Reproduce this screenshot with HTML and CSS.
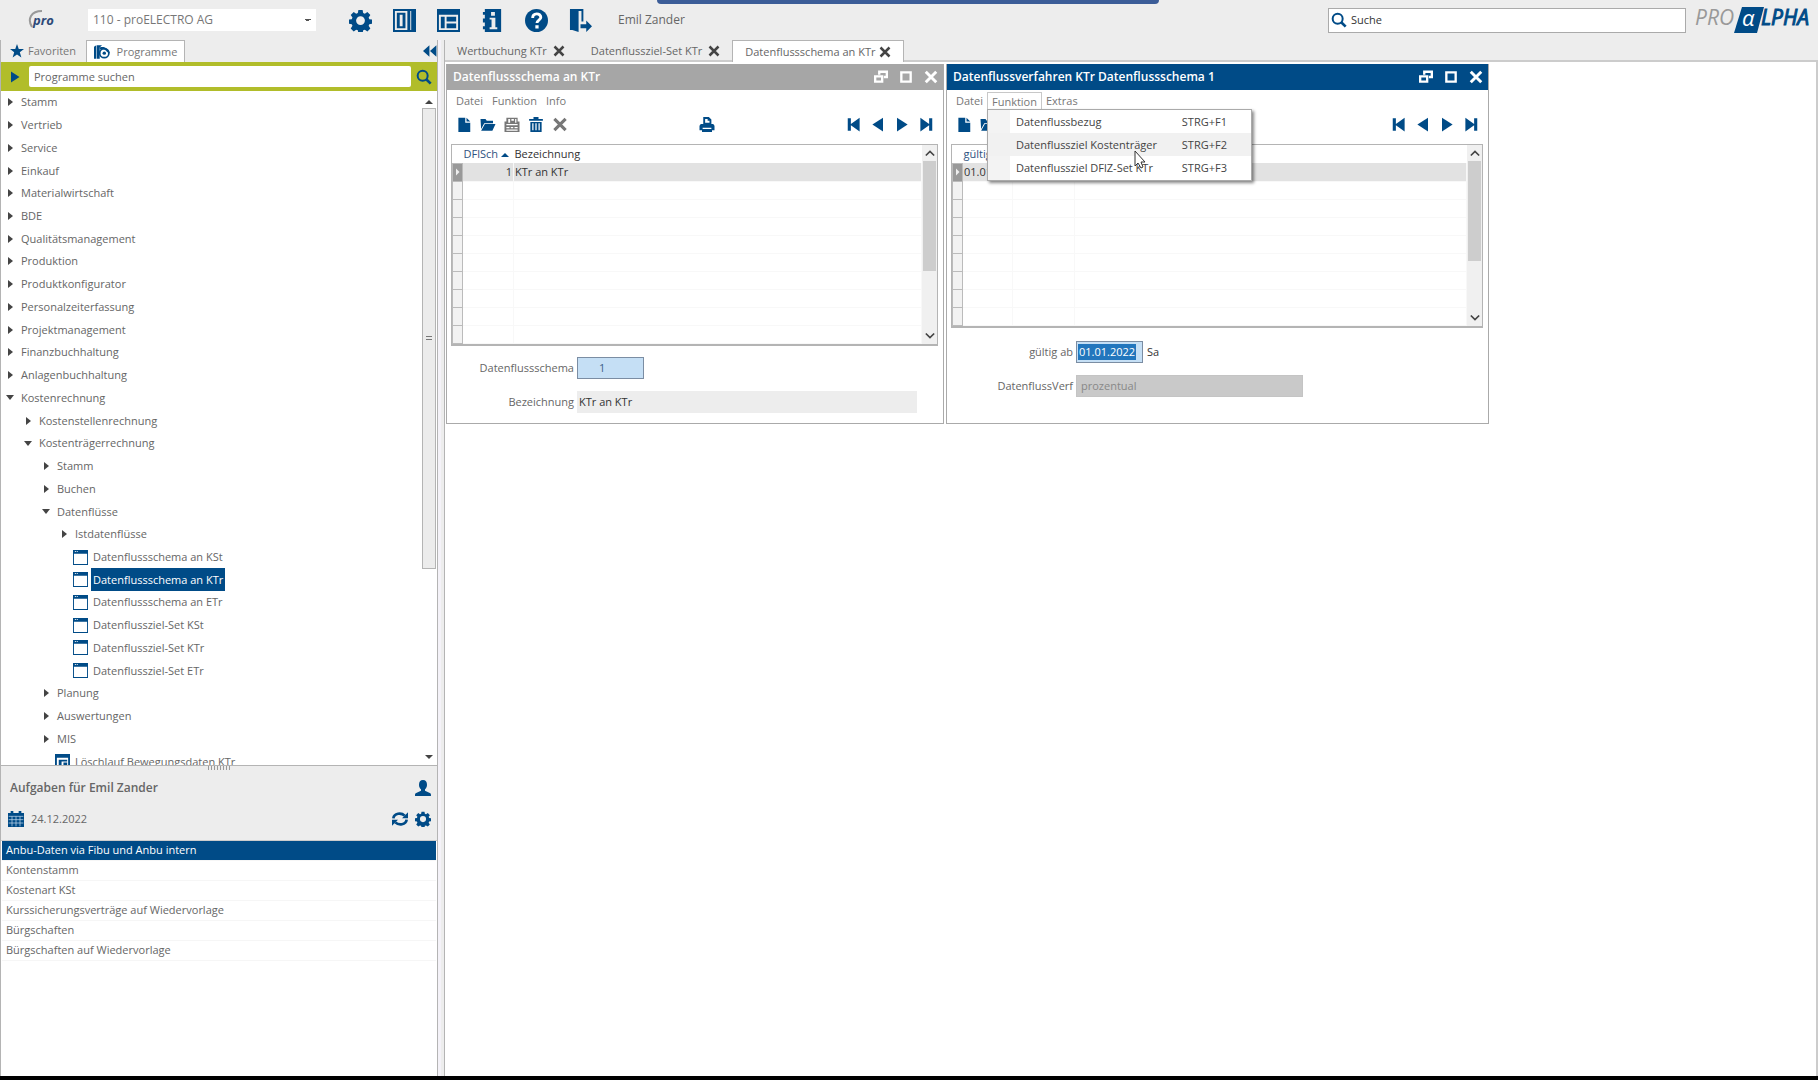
FILE: index.html
```html
<!DOCTYPE html>
<html lang="de">
<head>
<meta charset="utf-8">
<title>proALPHA</title>
<link rel="stylesheet" href="styles.css">
</head>
<body>
<svg class="defs" aria-hidden="true">
  <symbol id="gear" viewBox="0 0 24 24"><path fill-rule="evenodd" d="M9.800 1h4.400l.6 3.200 1.700.7 2.700-1.800 3.100 3.100-1.800 2.600.7 1.800 3.100.5v4.200l-3.100.6-.7 1.700 1.800 2.700-3.100 3.100-2.700-1.800-1.700.7-.6 3.200h-4.400l-.6-3.200-1.700-.7-2.600 1.800-3.100-3.100 1.800-2.700-.7-1.700-3.200-.6v-4.200l3.200-.5.7-1.800-1.800-2.600 3.100-3.100 2.600 1.800 1.700-.7zM12 7.500a4.600 4.600 0 1 0 0 9.200 4.600 4.600 0 0 0 0-9.200z"/></symbol>
  <symbol id="columns" viewBox="0 0 24 24"><path fill-rule="evenodd" d="M0 0h24v24H0zM2 2v20h13V2zM18 2v20h1V2zM4 4h9v16H4zM7 6v12h3V6z"/></symbol>
  <symbol id="panes" viewBox="0 0 24 24"><path fill-rule="evenodd" d="M0 0h24v24H0zM2 6v16h20V6zM4 8h4v12H4zM10 8h10v5H10zM10 15h10v5H10z"/></symbol>
  <symbol id="info" viewBox="0 0 24 24"><path fill-rule="evenodd" d="M4 0h17v24H4v-3H2v-3h2v-4H2v-4h2V6H2V3h2zM10.500 3v4h4V3zM9 9v2h2v8H9v2h8v-2h-2V9z"/></symbol>
  <symbol id="help" viewBox="0 0 24 24"><circle cx="12" cy="12" r="12"/><path d="M8 9.500c0-6 8.500-5.500 8.500-.8 0 3-4 3-4 6" fill="none" stroke="#fff" stroke-width="3"/><path d="M10.800 17h3.400v3.300h-3.400z" fill="#fff"/></symbol>
  <symbol id="exit" viewBox="0 0 24 24"><path d="M1 0h14v13h-2V2H9v20H1zM10 2v22L1 21V0z"/><path d="M12 16h6v-4l6 6-6 6v-4h-6z"/></symbol>
  <symbol id="star" viewBox="0 0 24 24"><path d="M12 0l3 8.500 9 .2-7.200 5.500L19.500 23 12 17.800 4.500 23l2.700-8.800L0 8.700l9-.2z"/></symbol>
  <symbol id="programs" viewBox="0 0 28 24"><path d="M0 3l4-3v24H0zM5 0h9l-4 4v20H5z"/><circle cx="18" cy="14" r="8" fill="none" stroke="#004b87" stroke-width="3"/><circle cx="18" cy="14" r="3"/><path d="M10 4c8-3 15 2 18 10l-5-2c-3-5-7-6-13-5z"/></symbol>
  <symbol id="collapse" viewBox="0 0 24 20"><path d="M11 0v20L0 10zM23 0v20L12 10z"/></symbol>
  <symbol id="play" viewBox="0 0 20 24"><path d="M2 1l17 11L2 23z"/></symbol>
  <symbol id="prev" viewBox="0 0 20 24"><path d="M18 1L1 12l17 11z"/></symbol>
  <symbol id="first" viewBox="0 0 24 24"><path d="M2 2h5v9L21 1v22L7 13v9H2z"/></symbol>
  <symbol id="last" viewBox="0 0 24 24"><path d="M22 2h-5v9L3 1v22l14-10v9h5z"/></symbol>
  <symbol id="search" viewBox="0 0 24 24"><circle cx="10" cy="10" r="7.500" fill="none" stroke="currentColor" stroke-width="3"/><path d="M15 15l7 7" stroke="currentColor" stroke-width="4"/></symbol>
  <symbol id="new" viewBox="0 0 24 24"><path d="M3 1h11v8h8v15H3zM16 1l6 6h-6z"/></symbol>
  <symbol id="open" viewBox="0 0 24 24"><path d="M0 3h8l2 3h10v4H6L1 19zM7 11h17l-5 11H1z"/></symbol>
  <symbol id="save" viewBox="0 0 24 24"><path fill-rule="evenodd" d="M3 1h18v6h3v17H0V7h3zM6 3v6h3V3zM11 3v3h4V3zM17 3v6h2V3zM3 11v2h18v-2zM3 16v2h5v-2zM10 16v2h4v-2zM16 16v2h5v-2zM3 20v2h18v-2z"/></symbol>
  <symbol id="trash" viewBox="0 0 24 24"><path fill-rule="evenodd" d="M8 0h8v3h7v3H1V3h7zM3 8h18v16H3zM6 10v11h2V10zM11 10v11h2V10zM16 10v11h2V10z"/></symbol>
  <symbol id="cross" viewBox="0 0 24 24"><path d="M3 3l18 18M21 3L3 21" stroke="currentColor" stroke-width="5" fill="none"/></symbol>
  <symbol id="print" viewBox="0 0 24 24"><path fill-rule="evenodd" d="M6 0h9l4 4v7h3l2 3v7h-4v3H4v-3H0v-7l2-3h4zM9 3v6h7V6h-3V3zM5 17v2h14v-2z"/></symbol>
  <symbol id="restore" viewBox="0 0 24 24"><path d="M9 8V3h13v9h-5M2 11h12v9H2z" fill="none" stroke="currentColor" stroke-width="4"/></symbol>
  <symbol id="max" viewBox="0 0 24 24"><path d="M4 4h16v16H4z" fill="none" stroke="currentColor" stroke-width="4"/></symbol>
  <symbol id="up" viewBox="0 0 12 8"><path d="M1 7l5-5 5 5" fill="none" stroke="#444" stroke-width="2"/></symbol>
  <symbol id="down" viewBox="0 0 12 8"><path d="M1 1l5 5 5-5" fill="none" stroke="#444" stroke-width="2"/></symbol>
  <symbol id="form" viewBox="0 0 16 16"><path fill-rule="evenodd" d="M0 0h16v16H0zM1 4v11h14V4zM2 1v1h1V1zM4 1v1h1V1z"/></symbol>
  <symbol id="job" viewBox="0 0 16 16"><path fill-rule="evenodd" d="M0 0h16v16H0zM2 4v10h12V4zM4 6h9v2H7v6H4zM9 9h4v3H9z"/></symbol>
  <symbol id="user" viewBox="0 0 24 24"><path d="M12 0c4 0 6 3 6 7 0 3-1 5-3 7v2l8 4c1 1 1 2 1 4H0c0-2 0-3 1-4l8-4v-2C7 12 6 10 6 7c0-4 2-7 6-7z"/></symbol>
  <symbol id="calendar" viewBox="0 0 24 24"><path d="M0 3h4V0h4v3h8V0h4v3h4v21H0z"/><path d="M1 8h22M1 13h22M1 18h22M6 8v15M12 8v15M18 8v15" stroke="#cfe3f3" stroke-width="1"/></symbol>
  <symbol id="refresh" viewBox="0 0 24 24"><path d="M2 11c1-8 12-9 17-4M22 13c-1 8-12 9-17 4" fill="none" stroke="currentColor" stroke-width="4"/><path d="M24 2v9h-9zM0 22v-9h9z"/></symbol>
</svg>

<header class="topbar">
  <div class="topbar-left">
    <svg class="pro-logo" viewBox="0 0 30 20" role="img" aria-label="pro"><path d="M4 17C-1 9 3 1 14 1" fill="none" stroke="#999" stroke-width="2"/><text x="5" y="15" class="pro-text">pro</text></svg>
    <select class="company" aria-label="Firma"><option>110 - proELECTRO AG</option></select>
  </div>
  <nav class="tools" aria-label="Werkzeuge">
    <button aria-label="Einstellungen"><svg><use href="#gear"/></svg></button>
    <button aria-label="Spalten"><svg><use href="#columns"/></svg></button>
    <button aria-label="Layout"><svg><use href="#panes"/></svg></button>
    <button aria-label="Info"><svg><use href="#info"/></svg></button>
    <button aria-label="Hilfe"><svg><use href="#help"/></svg></button>
    <button aria-label="Abmelden"><svg><use href="#exit"/></svg></button>
  </nav>
  <span class="username">Emil Zander</span>
  <label class="global-search"><svg class="i16"><use href="#search"/></svg><input type="text" value="Suche" aria-label="Suche"></label>
  <svg class="brand" viewBox="0 0 120 28" role="img" aria-label="PROALPHA"><path d="M47 1h22l-7 26H39z" fill="#004b87"/><text x="0" y="19" class="brand-grey">PRO</text><text x="47" y="20" class="brand-alpha">α</text><text x="66" y="19" class="brand-blue">LPHA</text></svg>
  <div class="share-bar"></div>
</header>

<div class="workspace">
  <aside class="sidebar">
    <div class="side-tabs">
      <button class="side-tab"><svg class="i14"><use href="#star"/></svg>Favoriten</button>
      <button class="side-tab active"><svg class="i16"><use href="#programs"/></svg>Programme</button>
      <button class="collapse" aria-label="Einklappen"><svg><use href="#collapse"/></svg></button>
    </div>
    <div class="program-search">
      <button aria-label="Start"><svg class="i12"><use href="#play"/></svg></button>
      <input type="text" value="Programme suchen" aria-label="Programme suchen">
      <button aria-label="Suchen"><svg class="i16"><use href="#search"/></svg></button>
    </div>
    <div class="tree-pane">
      <ul class="tree">
        <li><i class="closed"></i><span>Stamm</span></li>
        <li><i class="closed"></i><span>Vertrieb</span></li>
        <li><i class="closed"></i><span>Service</span></li>
        <li><i class="closed"></i><span>Einkauf</span></li>
        <li><i class="closed"></i><span>Materialwirtschaft</span></li>
        <li><i class="closed"></i><span>BDE</span></li>
        <li><i class="closed"></i><span>Qualitätsmanagement</span></li>
        <li><i class="closed"></i><span>Produktion</span></li>
        <li><i class="closed"></i><span>Produktkonfigurator</span></li>
        <li><i class="closed"></i><span>Personalzeiterfassung</span></li>
        <li><i class="closed"></i><span>Projektmanagement</span></li>
        <li><i class="closed"></i><span>Finanzbuchhaltung</span></li>
        <li><i class="closed"></i><span>Anlagenbuchhaltung</span></li>
        <li><i class="opened"></i><span>Kostenrechnung</span></li>
        <li class="l1"><i class="closed"></i><span>Kostenstellenrechnung</span></li>
        <li class="l1"><i class="opened"></i><span>Kostenträgerrechnung</span></li>
        <li class="l2"><i class="closed"></i><span>Stamm</span></li>
        <li class="l2"><i class="closed"></i><span>Buchen</span></li>
        <li class="l2"><i class="opened"></i><span>Datenflüsse</span></li>
        <li class="l3"><i class="closed"></i><span>Istdatenflüsse</span></li>
        <li class="leaf"><svg><use href="#form"/></svg><span>Datenflussschema an KSt</span></li>
        <li class="leaf selected"><svg><use href="#form"/></svg><span>Datenflussschema an KTr</span></li>
        <li class="leaf"><svg><use href="#form"/></svg><span>Datenflussschema an ETr</span></li>
        <li class="leaf"><svg><use href="#form"/></svg><span>Datenflussziel-Set KSt</span></li>
        <li class="leaf"><svg><use href="#form"/></svg><span>Datenflussziel-Set KTr</span></li>
        <li class="leaf"><svg><use href="#form"/></svg><span>Datenflussziel-Set ETr</span></li>
        <li class="l2"><i class="closed"></i><span>Planung</span></li>
        <li class="l2"><i class="closed"></i><span>Auswertungen</span></li>
        <li class="l2"><i class="closed"></i><span>MIS</span></li>
        <li class="leaf upper"><svg><use href="#job"/></svg><span>Löschlauf Bewegungsdaten KTr</span></li>
      </ul>
      <div class="tree-scroll"><i class="arrow-up"></i><div class="tree-thumb"></div><i class="arrow-down"></i></div>
    </div>
    <section class="tasks">
      <div class="grip"></div>
      <div class="tasks-row title"><h2>Aufgaben für Emil Zander</h2><button aria-label="Benutzer"><svg class="i16"><use href="#user"/></svg></button></div>
      <div class="tasks-row date"><svg class="i16"><use href="#calendar"/></svg><span>24.12.2022</span><button aria-label="Aktualisieren"><svg class="i16"><use href="#refresh"/></svg></button><button aria-label="Einstellungen"><svg class="i16"><use href="#gear"/></svg></button></div>
      <ul class="task-list">
        <li class="selected">Anbu-Daten via Fibu und Anbu intern</li>
        <li>Kontenstamm</li>
        <li>Kostenart KSt</li>
        <li>Kurssicherungsverträge auf Wiedervorlage</li>
        <li>Bürgschaften</li>
        <li>Bürgschaften auf Wiedervorlage</li>
      </ul>
    </section>
  </aside>
  <div class="splitter"></div>

  <main class="main">
    <div class="doc-tabs">
      <div class="doc-tab"><span>Wertbuchung KTr</span><button aria-label="Schließen"><svg class="i12"><use href="#cross"/></svg></button></div>
      <div class="doc-tab"><span>Datenflussziel-Set KTr</span><button aria-label="Schließen"><svg class="i12"><use href="#cross"/></svg></button></div>
      <div class="doc-tab active"><span>Datenflussschema an KTr</span><button aria-label="Schließen"><svg class="i12"><use href="#cross"/></svg></button></div>
    </div>
    <div class="desktop">
      <section class="window schema">
        <div class="titlebar"><h1>Datenflussschema an KTr</h1>
          <button aria-label="Wiederherstellen"><svg class="i14"><use href="#restore"/></svg></button><button aria-label="Maximieren"><svg class="i14"><use href="#max"/></svg></button><button aria-label="Schließen"><svg class="i14"><use href="#cross"/></svg></button></div>
        <div class="menubar"><button>Datei</button><button>Funktion</button><button>Info</button></div>
        <div class="toolbar">
          <div class="group"><button aria-label="Neu"><svg><use href="#new"/></svg></button><button aria-label="Öffnen"><svg><use href="#open"/></svg></button><button aria-label="Speichern" disabled><svg><use href="#save"/></svg></button><button aria-label="Löschen"><svg><use href="#trash"/></svg></button><button aria-label="Abbrechen" disabled><svg><use href="#cross"/></svg></button></div>
          <div class="group"><button aria-label="Drucken"><svg><use href="#print"/></svg></button></div>
          <div class="group nav"><button aria-label="Erster"><svg><use href="#first"/></svg></button><button aria-label="Voriger"><svg><use href="#prev"/></svg></button><button aria-label="Nächster"><svg><use href="#play"/></svg></button><button aria-label="Letzter"><svg><use href="#last"/></svg></button></div>
        </div>
        <div class="browser">
          <table>
            <colgroup><col class="c-mark"><col class="c-key"><col></colgroup>
            <thead><tr><th></th><th class="sorted">DFlSch <i class="arrow-up"></i></th><th>Bezeichnung</th></tr></thead>
            <tbody>
              <tr class="current"><td></td><td class="num">1</td><td>KTr an KTr</td></tr>
              <tr><td></td><td></td><td></td></tr><tr><td></td><td></td><td></td></tr><tr><td></td><td></td><td></td></tr>
              <tr><td></td><td></td><td></td></tr><tr><td></td><td></td><td></td></tr><tr><td></td><td></td><td></td></tr>
              <tr><td></td><td></td><td></td></tr><tr><td></td><td></td><td></td></tr><tr><td></td><td></td><td></td></tr>
            </tbody>
          </table>
          <div class="scroll"><svg><use href="#up"/></svg><div class="thumb"></div><svg><use href="#down"/></svg></div>
        </div>
        <div class="fields">
          <label for="schema">Datenflussschema</label><input id="schema" class="key" type="text" value="1">
          <label for="bez">Bezeichnung</label><input id="bez" class="readonly" type="text" value="KTr an KTr" readonly>
        </div>
      </section>

      <section class="window verfahren focused">
        <div class="titlebar"><h1>Datenflussverfahren KTr Datenflussschema 1</h1>
          <button aria-label="Wiederherstellen"><svg class="i14"><use href="#restore"/></svg></button><button aria-label="Maximieren"><svg class="i14"><use href="#max"/></svg></button><button aria-label="Schließen"><svg class="i14"><use href="#cross"/></svg></button></div>
        <div class="menubar"><button>Datei</button>
          <div class="menu-anchor"><button class="open">Funktion</button>
            <div class="popup" role="menu">
              <button role="menuitem"><span>Datenflussbezug</span><kbd>STRG+F1</kbd></button>
              <button role="menuitem" class="hover"><span>Datenflussziel Kostenträger</span><kbd>STRG+F2</kbd></button>
              <button role="menuitem"><span>Datenflussziel DFlZ-Set KTr</span><kbd>STRG+F3</kbd></button>
              <svg class="pointer" viewBox="0 0 12 19"><path d="M1 1v15l3-3 3 5 2-1-2-5h4z" fill="#fff" stroke="#333"/></svg>
            </div>
          </div>
          <button>Extras</button></div>
        <div class="toolbar">
          <div class="group"><button aria-label="Neu"><svg><use href="#new"/></svg></button><button aria-label="Öffnen"><svg><use href="#open"/></svg></button></div>
          <div class="group nav"><button aria-label="Erster"><svg><use href="#first"/></svg></button><button aria-label="Voriger"><svg><use href="#prev"/></svg></button><button aria-label="Nächster"><svg><use href="#play"/></svg></button><button aria-label="Letzter"><svg><use href="#last"/></svg></button></div>
        </div>
        <div class="browser">
          <table>
            <colgroup><col class="c-mark"><col class="c-date"><col class="c-method"><col></colgroup>
            <thead><tr><th></th><th class="sorted">gültig ab</th><th></th><th></th></tr></thead>
            <tbody>
              <tr class="current"><td></td><td>01.01.22</td><td></td><td></td></tr>
              <tr><td></td><td></td><td></td><td></td></tr><tr><td></td><td></td><td></td><td></td></tr>
              <tr><td></td><td></td><td></td><td></td></tr><tr><td></td><td></td><td></td><td></td></tr>
              <tr><td></td><td></td><td></td><td></td></tr><tr><td></td><td></td><td></td><td></td></tr>
              <tr><td></td><td></td><td></td><td></td></tr><tr><td></td><td></td><td></td><td></td></tr>
            </tbody>
          </table>
          <div class="scroll"><svg><use href="#up"/></svg><div class="thumb"></div><svg><use href="#down"/></svg></div>
        </div>
        <div class="fields">
          <label for="ab">gültig ab</label><div class="with-note"><input id="ab" class="key picked" type="text" value="01.01.2022"><span>Sa</span></div>
          <label for="verf">DatenflussVerf</label><select id="verf" disabled><option>prozentual</option></select>
        </div>
      </section>
    </div>
  </main>
</div>
<footer class="bottom"></footer>
</body>
</html>
```
FILE: styles.css
```css
:root {
  --blue: #004b87;
  --chrome: #ededed;
  --line: #b4b4b4;
  --text: #666;
}
* { box-sizing: border-box; }
body {
  margin: 0;
  height: 100vh;
  display: flex;
  flex-direction: column;
  overflow: hidden;
  background: var(--chrome);
  color: var(--text);
  font: 11px/18px "Open Sans", "Noto Sans", sans-serif;
}
button, input, select { font: inherit; color: inherit; margin: 0; }
button { padding: 0; border: 0; background: none; color: var(--blue); display: flex; align-items: center; justify-content: center; }
ul { list-style: none; margin: 0; padding: 0; }
h1, h2 { margin: 0; }
svg { fill: currentColor; flex: none; display: block; }
.defs { width: 0; height: 0; position: absolute; }
.i12 { width: 12px; height: 12px; }
.i14 { width: 14px; height: 14px; }
.i16 { width: 16px; height: 16px; }

/* Header */
.topbar { position: relative; height: 40px; flex: none; display: flex; align-items: center; padding-right: 3px; }
.topbar-left { width: 349px; padding-left: 28px; display: flex; align-items: center; gap: 30px; }
.pro-logo { width: 30px; height: 20px; }
.pro-text { font: italic bold 13px "Open Sans", sans-serif; fill: #2d4a78; }
.company {
  appearance: none; width: 228px; height: 22px; border: 0; border-radius: 0; padding: 0 5px;
  font-size: 12px; color: #777;
  background: linear-gradient(135deg, #555 50%, transparent 50%) 220px 10px / 3px 3px no-repeat,
    linear-gradient(225deg, #555 50%, transparent 50%) 217px 10px / 3px 3px no-repeat, #fff;
}
.tools { display: flex; gap: 21px; }
.tools svg { width: 23px; height: 23px; }
.username { margin-left: 26px; font-size: 12px; }
.global-search { margin-left: auto; width: 358px; height: 25px; display: flex; align-items: center; gap: 4px; padding-left: 2px; background: #fff; border: 1px solid #aaa; color: var(--blue); }
.global-search input { border: 0; outline: 0; padding: 0; flex: 1; color: #333; }
.brand { width: 120px; height: 28px; margin-left: 9px; overflow: visible; }
.brand-grey, .brand-blue { font: italic 21px "Open Sans", sans-serif; fill: #999; }
.brand-blue { fill: var(--blue); stroke: var(--blue); }
.brand-alpha { font: italic 22px "Open Sans", sans-serif; fill: #fff; }
.share-bar { position: absolute; top: 0; left: 50%; margin-left: -252px; width: 502px; height: 4px; background: #3c5d98; border-radius: 0 0 4px 4px; }

.workspace { flex: 1; min-height: 0; display: flex; }
.bottom { height: 4px; background: #000; flex: none; }

/* Sidebar */
.sidebar { width: 438px; flex: none; display: flex; flex-direction: column; border-left: 1px solid var(--line); border-right: 1px solid var(--line); }
.side-tabs { height: 22px; flex: none; display: flex; align-items: stretch; padding-left: 8px; }
.side-tab { color: #777; gap: 4px; width: 68px; }
.side-tab svg { color: var(--blue); }
.side-tab.active { margin-left: 9px; width: 99px; gap: 7px; background: #fff; border: 1px solid var(--line); border-bottom: 0; }
.collapse { margin-left: auto; }
.collapse svg { width: 14px; height: 12px; }
.program-search { height: 29px; flex: none; display: flex; align-items: center; background: #b1bd2a; }
.program-search button { width: 28px; height: 28px; }
.program-search button:last-child { width: 26px; }
.program-search input { flex: 1; min-width: 0; height: 21px; border: 0; border-radius: 2px; padding: 0 5px; }
.tree-pane { flex: 1; min-height: 0; display: flex; overflow: hidden; background: #fff; border-bottom: 1px solid var(--line); }
.tree { flex: 1; margin-bottom: -8px; display: grid; grid-template-rows: repeat(30, minmax(0, 1fr)); }
.tree li { display: flex; align-items: center; padding-left: 5px; }
.tree li i { width: 15px; flex: none; }
.tree li i::before { content: ""; display: block; }
.closed::before { width: 0; height: 0; margin-left: 2px; border-left: 5px solid #444; border-top: 4px solid transparent; border-bottom: 4px solid transparent; }
.opened::before { width: 0; height: 0; border-top: 5px solid #444; border-left: 4px solid transparent; border-right: 4px solid transparent; }
.tree .l1 { padding-left: 23px; }
.tree .l2 { padding-left: 41px; }
.tree .l3 { padding-left: 59px; }
.tree .leaf { padding-left: 72px; gap: 3px; }
.tree .upper { padding-left: 54px; }
.leaf svg { width: 15px; height: 15px; color: var(--blue); }
.leaf span { padding: 2px; align-self: stretch; display: flex; align-items: center; }
.tree .selected span { background: var(--blue); color: #fff; }
.tree-scroll { width: 16px; display: flex; flex-direction: column; align-items: center; padding: 9px 1px 6px 0; }
.arrow-up, .arrow-down { width: 0; height: 0; border-left: 4px solid transparent; border-right: 4px solid transparent; flex: none; }
.arrow-up { border-bottom: 4px solid #444; }
.arrow-down { border-top: 4px solid #444; }
.tree-thumb { width: 14px; height: 70%; margin: 4px 0 auto; background: #ececec; border: 1px solid var(--line); display: grid; place-items: center; }
.tree-thumb::before { content: ""; width: 6px; height: 6px; background: repeating-linear-gradient(#777 0 1px, transparent 1px 3px); }

.tasks { flex: none; height: 310px; display: flex; flex-direction: column; }
.grip { height: 4px; width: 22px; margin: 0 auto; background: repeating-linear-gradient(90deg, #999 0 1px, transparent 1px 3px); }
.tasks-row { display: flex; align-items: center; padding: 0 6px 0 7px; gap: 7px; }
.tasks-row.title { height: 36px; padding-left: 9px; }
.tasks-row.date { height: 26px; margin-bottom: 8px; }
.tasks-row.date > svg { color: var(--blue); }
.tasks-row h2 { flex: 1; font-size: 12px; font-weight: 600; }
.tasks-row.date span { flex: 1; }
.task-list { flex: 1; background: #fff; border-top: 1px solid #ccc; padding: 0 1px; }
.task-list li { height: 20px; line-height: 18px; padding-left: 4px; border-bottom: 1px solid #f6f6f6; }
.task-list .selected { background: var(--blue); color: #fff; }
.splitter { width: 7px; flex: none; border-left: 3px solid #f4f2f8; border-right: 1px solid var(--line); }

/* Documents */
.main { flex: 1; min-width: 0; display: flex; flex-direction: column; }
.doc-tabs { height: 22px; flex: none; display: flex; padding-left: 12px; border-bottom: 2px solid #ccc; }
.doc-tab { height: 22px; display: flex; align-items: center; gap: 6px; margin-right: 26px; }
.doc-tab button { color: #444; }
.doc-tab.active { margin: 0 0 0 -14px; padding: 0 12px; gap: 4px; background: #fff; border: 1px solid var(--line); border-bottom: 0; }
.desktop { flex: 1; display: flex; align-items: flex-start; gap: 2px; padding: 2px 0 0 1px; background: #fff; border-right: 2px solid #ccc; }
.window { flex: 0 1 498px; min-width: 0; background: #fff; border: 1px solid #aaa; border-top: 0; padding-bottom: 10px; }
.verfahren { flex-basis: 543px; }
.desktop { align-items: stretch; align-content: flex-start; flex-wrap: wrap; }
.titlebar { height: 26px; display: flex; align-items: center; gap: 11px; padding: 0 5px 0 6px; background: #a6a6a6; color: #fff; }
.titlebar h1 { flex: 1; font-size: 12px; font-weight: 600; white-space: nowrap; }
.titlebar button { color: #fff; }
.focused .titlebar { background: var(--blue); }
.menubar { height: 20px; display: flex; align-items: center; gap: 9px; padding: 2px 9px 0; }
.menubar > button, .menu-anchor > button { color: #777; }
.toolbar { height: 34px; display: flex; align-items: center; justify-content: space-between; padding: 0 9px 5px; }
.group { display: flex; gap: 8px; }
.group svg { width: 16px; height: 15px; }
.group button:disabled { color: #777; }
.browser { display: flex; margin: 0 5px 0 4px; border: 1px solid var(--line); border-bottom-width: 2px; }
.browser table { flex: 1; table-layout: fixed; border-collapse: collapse; line-height: 16px; color: #333; }
.c-mark { width: 10px; }
.c-key { width: 51px; }
.c-date { width: 50px; }
.c-method { width: 62px; }
.browser th, .browser td { height: 18px; padding: 0 1px; overflow: hidden; white-space: nowrap; text-align: left; font-weight: 400; }
.browser td { border-bottom: 1px solid #f8f8f8; border-right: 1px solid #f8f8f8; }
.browser td:first-child { background: #f2f2f2; border: 1px solid #bbb; }
.browser .sorted { color: #2e5280; }
.browser .sorted .arrow-up { display: inline-block; vertical-align: middle; border-bottom-color: var(--blue); }
.browser .current td { background: #e2e2e2; }
.browser .current td:first-child { background: #999; }
.browser .current td:first-child::before { content: ""; display: block; width: 4px; height: 8px; margin: auto; background: #eee; clip-path: polygon(0 0, 100% 50%, 0 100%); }
.browser .num { text-align: right; }
.scroll { width: 15px; background: #f0f0f0; display: flex; flex-direction: column; align-items: center; padding: 4px 0; }
.scroll svg { width: 10px; height: 8px; }
.thumb { width: 13px; height: 58%; margin: 4px 0 auto; background: #cdcdcd; }
.fields { display: grid; grid-template-columns: 122px 1fr; grid-auto-rows: 22px; gap: 12px 3px; padding: 11px 26px 0 5px; align-items: center; }
.fields label { text-align: right; }
.fields input { height: 22px; padding: 0 2px; border: 1px solid #7b8da3; border-radius: 0; }
.fields .key { width: 67px; background: #c5dff5; color: #3d5f88; padding-left: 21px; }
.fields .readonly { border: 0; background: var(--chrome); color: #333; width: 100%; }
.with-note { display: flex; align-items: center; gap: 4px; color: #333; }
.fields .picked { padding-left: 2px; color: #fff; background: linear-gradient(#2276bd, #2276bd) 1px 2px / 58px 16px no-repeat, #c5dff5; }
.fields select { appearance: none; width: 227px; height: 22px; padding: 0 4px; border: 1px solid #c4c4c4; border-radius: 0; background: #c9c9c9; color: #888; opacity: 1; }

/* Second window: open menu and its own label column */
.verfahren .menubar { gap: 4px; }
.verfahren .fields { grid-template-columns: 121px 1fr; padding-top: 13px; }
.menu-anchor { position: relative; }
.menu-anchor .open { height: 18px; padding: 0 4px; border: 1px solid #c8c8c8; border-bottom: 0; background: #fff; }
.popup { position: absolute; z-index: 2; top: 17px; left: 0; width: 265px; padding: 0 0 1px; background: linear-gradient(90deg, #f3f3f3 22px, #fff 22px); border: 1px solid #aaa; box-shadow: 2px 2px 3px #0007; }
.popup button { width: 100%; height: 23px; padding: 0 24px 0 28px; justify-content: space-between; color: #444; }
.popup .hover { background: #f1f1f1; }
.popup kbd { font: inherit; }
.pointer { position: absolute; left: 146px; top: 40px; width: 12px; height: 19px; }
```
